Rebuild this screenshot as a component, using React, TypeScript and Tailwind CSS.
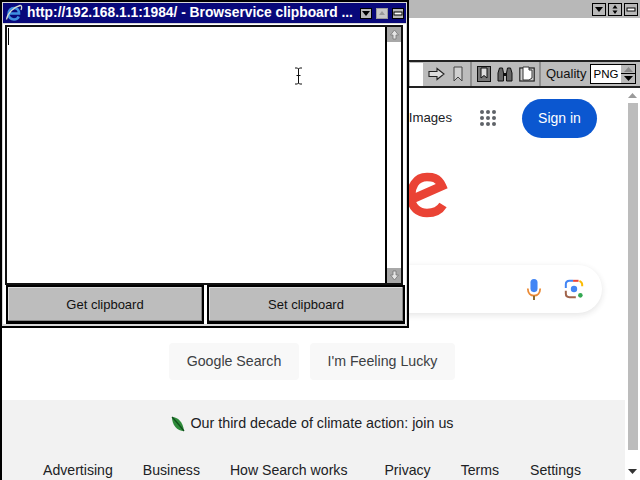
const sans = { fontFamily: '"Liberation Sans", Arial, sans-serif' };

function MiniBtn({ kind, small }: { kind: 'down' | 'updown' | 'min' | 'up'; small?: boolean }) {
  const box = small ? 'h-[11px] w-[12px]' : 'h-[13px] w-[14px]';
  const face = kind === 'up' ? 'border-[#9a9a9a] bg-[#c8c8c8]' : 'border-black bg-[#b8b8b8]';
  return (
    <div className={`flex items-center justify-center border ${box} ${face}`}>
      <svg width="10" height="9" viewBox="0 0 10 9">
        {kind === 'down' && <path d="M1 2h8L5 7z" fill="#000" />}
        {kind === 'up' && <path d="M2 6h6L5 2z" fill="#999" />}
        {kind === 'updown' && <path d="M5 0l2.500 3.500h-5zM5 9l2.500-3.500h-5z" fill="#000" />}
        {kind === 'min' && <rect x="1" y="3" width="8" height="3" fill="#fff" stroke="#000" />}
      </svg>
    </div>
  );
}

function IeIcon() {
  return (
    <svg width="18" height="18" viewBox="0 0 18 18">
      <path d="M4.500 9.500h9.500c0-3.500-2-5.500-5-5.500S3.500 6.500 3.500 10s2.500 5.500 5.500 5.500c2.300 0 4-1.200 4.700-3" fill="none" stroke="#3f8fe0" strokeWidth="2.600" />
      <path d="M1.500 15.500C2.500 9 9 3 15 1.500c2-.3 2 2.500 1 4.500" fill="none" stroke="#d8e0d0" strokeWidth="1.300" />
    </svg>
  );
}

function ToolbarIcons() {
  return (
    <div className="flex h-full items-center">
      <div className="h-[23px] w-[13px] bg-white" />
      <div className="flex h-full items-center gap-[8px] border-r-2 border-[#8f8f8f] pl-[5px] pr-[7px]">
        <svg width="17" height="14" viewBox="0 0 17 14"><path d="M1 4.500h8V1.500l7 5.500-7 5.500V9.500H1z" fill="#ddd" stroke="#222" strokeWidth="1.100" /></svg>
        <svg width="10" height="16" viewBox="0 0 10 16"><path d="M1 1h8v14L5 11l-4 4z" fill="#cfcfcf" stroke="#444" strokeWidth="1" /></svg>
      </div>
      <div className="flex h-full items-center gap-[6px] border-r-2 border-[#8f8f8f] pl-[5px] pr-[4px]">
        <svg width="14" height="16" viewBox="0 0 14 16"><rect x="0.500" y="0.500" width="13" height="15" fill="#777" stroke="#111" /><path d="M4 2h6v10L7 9.500 4 12z" fill="#ddd" stroke="#111" /></svg>
        <svg width="16" height="15" viewBox="0 0 16 15"><path d="M1 6l1.500-5h3L6.500 6v8H1zM9.500 6L10.500 1h3L15 6v8H9.500z" fill="#666" stroke="#111" /><rect x="6.500" y="6" width="3" height="3" fill="#111" /></svg>
        <svg width="16" height="16" viewBox="0 0 16 16"><rect x="0.800" y="2" width="14.400" height="13" fill="#ccc" stroke="#222" strokeWidth="1.200" /><path d="M4 1h6v3L13 4v8l-3 2H4z" fill="#fff" stroke="#333" /></svg>
      </div>
      <span className="pl-[5px] text-[13px] text-[#111]" style={sans}>Quality</span>
      <div className="ml-[4px] flex h-[20px] w-[46px] items-stretch border border-black bg-white">
        <span className="flex-1 pl-[2px] text-[11.500px] leading-[18px] text-black" style={sans}>PNG</span>
        <div className="flex w-[14px] flex-col bg-[#b8b8b8]">
          <div className="flex h-[9px] items-center justify-center border-b border-black"><svg width="9" height="5" viewBox="0 0 9 5"><path d="M0 5h9L4.500 0z" fill="#888" /></svg></div>
          <div className="flex flex-1 items-center justify-center"><svg width="9" height="5" viewBox="0 0 9 5"><path d="M0 0h9L4.500 5z" fill="#000" /></svg></div>
        </div>
      </div>
    </div>
  );
}

function Footer() {
  return (
    <div className="flex h-[80px] flex-col bg-[#f2f2f2] text-[#202124]" style={sans}>
      <div className="flex h-[46px] items-center justify-center gap-[5px] pr-[2px] pt-[2px] text-[14.300px]">
        <svg width="14" height="16" viewBox="0 0 14 16"><path d="M1 1c6 0 11 5 12 14C6 15 1 9 1 1z" fill="#2e8b3a" /><path d="M1 1c4 4 8 9 12 14" stroke="#114f1c" strokeWidth="1.300" fill="none" /></svg>
        <span>Our third decade of climate action: join us</span>
      </div>
      <div className="flex items-center justify-center gap-[30px] pr-[3px] pt-[15px] text-[14.100px] leading-[18px]">
        <span>Advertising</span>
        <span>Business</span>
        <span>How Search works</span>
        <span className="ml-[7px]">Privacy</span>
        <span>Terms</span>
        <span className="ml-[1px]">Settings</span>
      </div>
    </div>
  );
}

function Scrollbar() {
  return (
    <div className="flex w-[15px] shrink-0 flex-col items-center bg-white pt-[5px]">
      <svg width="9" height="5" viewBox="0 0 9 5"><path d="M0 5h9L4.500 0z" fill="#9a9a9a" /></svg>
      <div className="mt-[5px] h-[347px] w-[10px] bg-[#bcbcbc]" />
      <div className="mt-auto mb-[6px]"><svg width="9" height="5" viewBox="0 0 9 5"><path d="M0 0h9L4.500 5z" fill="#333" /></svg></div>
    </div>
  );
}

function Page() {
  return (
    <div className="flex h-[392px] border-l-2 border-black bg-white">
      <div className="flex min-w-0 flex-1 flex-col">
        <div className="flex h-[52px] items-center justify-end gap-[21px] pr-[28px] pt-[8px]" style={sans}>
          <span className="mr-[7px] mb-[1px] text-[13.200px] text-[#202124]">Images</span>
          <div className="grid grid-cols-3 gap-[2px]">
            {Array.from({ length: 9 }).map((_, i) => <div key={i} className="h-[4px] w-[4px] rounded-full bg-[#5f6368]" />)}
          </div>
          <div className="ml-[5px] flex h-[39px] w-[75px] items-center justify-center rounded-[20px] bg-[#0b57d0] text-[14px] text-white">Sign in</div>
        </div>
        <div className="flex h-[80px] items-end pl-[403px]">
          <svg width="44" height="52" viewBox="0 0 44 52">
            <path d="M3 33 L37 18 C33 9 27 9 22 9 C10 9 6 20 6 28 C6 40 14 45 22 45 C30 45 35 42 38 37" fill="none" stroke="#ea4335" strokeWidth="8.500" />
          </svg>
        </div>
        <div className="mt-[45px] ml-[20px] mr-[23px] flex h-[48px] items-center justify-end gap-[20px] rounded-[24px] bg-white pr-[18px] shadow-[0_2px_6px_rgba(32,33,36,0.12)]">
          <svg width="20" height="23" viewBox="0 0 20 26">
            <rect x="6" y="1" width="8" height="15" rx="4" fill="#4285f4" />
            <path d="M3 12c0 5 3 8 7 8s7-3 7-8" fill="none" stroke="#ea8a35" strokeWidth="2" />
            <path d="M10 20v5" stroke="#8a6a2f" strokeWidth="2.200" />
          </svg>
          <svg width="20" height="20" viewBox="0 0 22 22" fill="none" strokeWidth="2.200">
            <path d="M2 10V6c0-2.500 1.500-4 4-4h4" stroke="#4285f4" />
            <path d="M10 2h6" stroke="#ea4335" />
            <path d="M20 8V6c0-2-1-3-3-4" stroke="#fbbc04" />
            <path d="M2 13v3c0 2.500 1.500 4 4 4h7" stroke="#a0634a" />
            <circle cx="11" cy="11" r="3.500" fill="#4285f4" stroke="none" />
            <circle cx="18" cy="18" r="2.500" fill="#34a853" stroke="none" />
          </svg>
        </div>
        <div className="mt-[30px] flex justify-center gap-[11px] pr-[3px] text-[14.200px] text-[#3c4043]" style={sans}>
          <div className="flex h-[37px] w-[130px] items-center justify-center rounded-[4px] bg-[#f8f8f8]">Google Search</div>
          <div className="flex h-[37px] w-[145px] items-center justify-center rounded-[4px] bg-[#f8f8f8]">I&apos;m Feeling Lucky</div>
        </div>
        <div className="mt-auto"><Footer /></div>
      </div>
      <Scrollbar />
    </div>
  );
}

function ClipboardWindow() {
  return (
    <div className="absolute left-0 top-0 flex h-[328px] w-[409px] flex-col border-2 border-black bg-[#d8d8d8] p-[1px] pb-[2px]">
      <div className="flex h-[20px] shrink-0 items-center bg-[#08087a] pl-[2px] pr-[2px] text-white">
        <IeIcon />
        <span className="ml-[4px] flex-1 whitespace-nowrap text-[13.800px] font-bold" style={sans}>
          http://192.168.1.1:1984/ - Browservice clipboard ...
        </span>
        <div className="flex gap-[4px]">
          <MiniBtn kind="down" small />
          <MiniBtn kind="up" small />
          <MiniBtn kind="min" small />
        </div>
      </div>
      <div className="mt-[1px] flex flex-1 flex-col bg-white px-[2px] pt-[1px]">
        <div className="mr-[1px] flex h-[260px] border-2 border-[#111] bg-white">
          <div className="flex-1 pl-[1px] pt-[1px]"><div className="h-[17px] w-[1px] bg-black" /></div>
          <div className="flex w-[16px] flex-col justify-between border-l-2 border-black">
            <div className="flex h-[15px] items-center justify-center bg-[#a8a8a8]">
              <svg width="11" height="11" viewBox="0 0 11 11"><path d="M5.500 1l4 5H7v4H4V6H1.500z" fill="#e4e4e4" stroke="#777" strokeWidth="0.800" /></svg>
            </div>
            <div className="flex h-[15px] items-center justify-center bg-[#a8a8a8]">
              <svg width="11" height="11" viewBox="0 0 11 11"><path d="M5.500 10l4-5H7V1H4v4H1.500z" fill="#e4e4e4" stroke="#777" strokeWidth="0.800" /></svg>
            </div>
          </div>
        </div>
        <div className="-mr-[1px] ml-[1px] flex flex-1 gap-[3px] bg-white text-[13px] text-[#111]" style={sans}>
          <div className="flex flex-1 items-center justify-center border-2 border-b-[3px] border-black bg-[#bdbdbd] pt-[1px] shadow-[inset_-1px_-1px_0_#858585,inset_1px_1px_0_#dcdcdc]">Get clipboard</div>
          <div className="flex flex-1 items-center justify-center border-2 border-b-[3px] border-black bg-[#bdbdbd] pt-[1px] shadow-[inset_-1px_-1px_0_#858585,inset_1px_1px_0_#dcdcdc]">Set clipboard</div>
        </div>
      </div>
    </div>
  );
}

export default function App() {
  return (
    <div className="relative h-[480px] w-[640px] overflow-hidden bg-white">
      <div className="flex h-[18px] items-center justify-end gap-[2px] bg-[#b8b8b8] pr-[2px]">
        <MiniBtn kind="down" />
        <MiniBtn kind="updown" />
        <MiniBtn kind="min" />
      </div>
      <div className="h-[42px] bg-white" />
      <div className="flex h-[28px] items-center justify-start border-y-2 border-[#222] bg-[#bcbcbc] pl-[410px]">
        <ToolbarIcons />
      </div>
      <Page />
      <ClipboardWindow />
      <svg className="absolute left-[293px] top-[67px]" width="11" height="18" viewBox="0 0 11 18">
        <path d="M2 1h2.500L5.500 2l1-1H9M5.500 2v14M2 17h2.500l1-1 1 1H9M3.500 8.500h4" fill="none" stroke="#111" strokeWidth="1" />
      </svg>
    </div>
  );
}
